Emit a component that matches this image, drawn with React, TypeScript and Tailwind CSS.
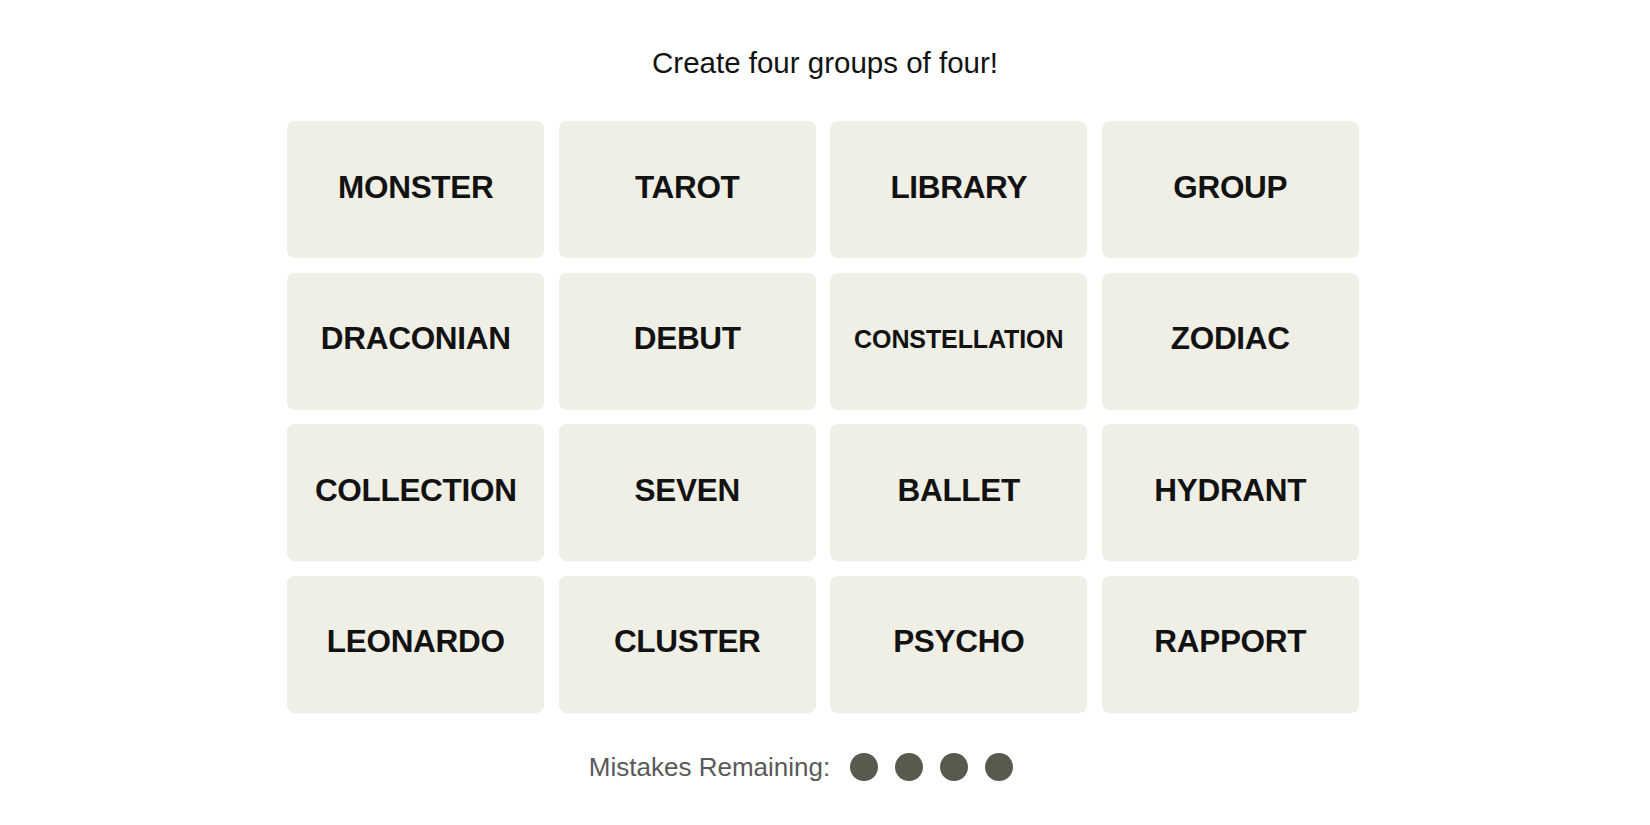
import React from "react"

const words = [
	"MONSTER", "TAROT", "LIBRARY", "GROUP",
	"DRACONIAN", "DEBUT", "CONSTELLATION", "ZODIAC",
	"COLLECTION", "SEVEN", "BALLET", "HYDRANT",
	"LEONARDO", "CLUSTER", "PSYCHO", "RAPPORT",
]

function Tile({ word }: { word: string }) {
	const long = word.length > 10
	return (
		<div className="flex h-[137px] w-[257px] items-center justify-center rounded-[8px] bg-[#efefe6]">
			<span
				className={
					long
						? "mb-[3px] text-[25px] font-bold tracking-[-0.1px] text-[#121212]"
						: "mb-[4px] text-[31.5px] font-bold tracking-[-0.3px] text-[#121212]"
				}>
				{word}
			</span>
		</div>
	)
}

export default function App() {
	return (
		<div className="flex min-h-screen w-full flex-col items-center bg-white font-['Liberation_Sans',Arial,sans-serif]">
			<p className="pt-[46px] text-[29.5px] leading-[34px] text-[#121212]">Create four groups of four!</p>

			<div className="mt-[41px] mr-[4px] grid grid-cols-[repeat(4,257px)] gap-x-[14.5px] gap-y-[14.5px]">
				{words.map((w) => (
					<Tile key={w} word={w} />
				))}
			</div>

			<div className="mt-[39px] mr-[48px] flex items-center">
				<span className="text-[26px] leading-[30px] text-[#5a5a5a]">Mistakes Remaining:</span>
				<div className="ml-[20px] flex gap-[17px]">
					<span className="h-[28px] w-[28px] rounded-full bg-[#5a594e]" />
					<span className="h-[28px] w-[28px] rounded-full bg-[#5a594e]" />
					<span className="h-[28px] w-[28px] rounded-full bg-[#5a594e]" />
					<span className="h-[28px] w-[28px] rounded-full bg-[#5a594e]" />
				</div>
			</div>
		</div>
	)
}
